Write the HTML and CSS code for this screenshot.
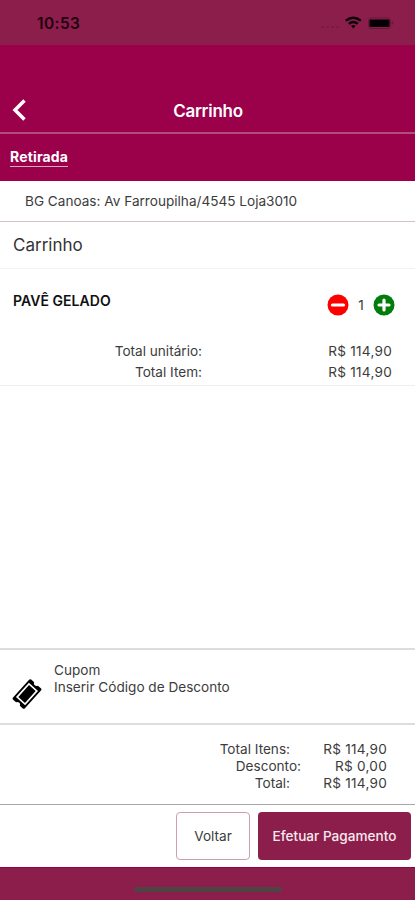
FILE: index.html
```html
<!DOCTYPE html>
<html lang="pt-BR">
<head>
<meta charset="utf-8">
<title>Carrinho</title>
<link rel="stylesheet" href="styles.css">
</head>
<body>
<div class="status">
  <span class="time">10:53</span>
  <svg class="indicators" width="76" height="18" viewBox="0 0 76 18">
    <path d="M0 13h3M5 13h3M10 13h3M15 13h3" stroke="#6b193b" stroke-width="1"/>
    <g fill="none" stroke="#0c0208" stroke-width="2.400">
      <path d="M24.800 6.700Q32.300 .8 39.800 6.700"/>
      <path d="M27.800 9.900Q32.300 6.200 36.800 9.900"/>
    </g>
    <path d="M30 11.800Q32.300 10 34.600 11.800L32.300 14.500z" fill="#0c0208"/>
    <rect x="47.500" y="4" width="22" height="10.500" rx="2.500" fill="none" stroke="#65183a"/>
    <rect x="48.500" y="5.500" width="20" height="7.500" rx="1" fill="#050003"/>
    <path d="M71.500 7.500v3" stroke="#65183a" stroke-width="1.500"/>
  </svg>
</div>
<header class="header">
  <svg class="back" width="16" height="24" viewBox="0 0 16 24"><path d="M12.500 2.500L3 12l9.500 9.500" fill="none" stroke="#fff" stroke-width="3.500"/></svg>
  <h1>Carrinho</h1>
</header>
<nav class="tabs"><span class="tab">Retirada</span></nav>
<div class="address">BG Canoas: Av Farroupilha/4545 Loja3010</div>
<h2 class="section">Carrinho</h2>
<section class="item">
  <div class="item-head">
    <strong class="name">PAVÊ GELADO</strong>
    <div class="qty">
      <svg width="22" height="22" viewBox="0 0 22 22"><circle cx="11" cy="11" r="10.500" fill="#f00"/><path d="M5.500 11h11" stroke="#fff" stroke-width="3.200" stroke-linecap="round"/></svg>
      <span>1</span>
      <svg width="22" height="22" viewBox="0 0 22 22"><circle cx="11" cy="11" r="10.500" fill="#007d0b"/><path d="M6 11h10M11 6v10" stroke="#fff" stroke-width="3.200" stroke-linecap="round"/></svg>
    </div>
  </div>
  <div class="line"><span>Total unitário:</span><span class="value">R$ 114,90</span></div>
  <div class="line"><span>Total Item:</span><span class="value">R$ 114,90</span></div>
</section>
<main class="space"></main>
<section class="coupon">
  <svg class="ticket" width="30" height="30" viewBox="0 0 30 30">
    <g transform="rotate(-48 15 15)">
      <path d="M3 7h24q1.500 0 1.500 1.500v4a2.600 2.600 0 0 0 0 5v4q0 1.500-1.500 1.500H3Q1.500 23 1.500 21.500v-4a2.600 2.600 0 0 0 0-5v-4Q1.500 7 3 7z" fill="#000"/>
      <rect x="6.200" y="9.700" width="17.600" height="10.600" fill="#000" stroke="#fff" stroke-width="1.700"/>
    </g>
  </svg>
  <div class="coupon-text"><div>Cupom</div><div>Inserir Código de Desconto</div></div>
</section>
<section class="totals">
  <div class="sum"><span>Total Itens:</span><span class="value">R$ 114,90</span></div>
  <div class="sum discount"><span>Desconto:</span><span class="value">R$ 0,00</span></div>
  <div class="sum"><span>Total:</span><span class="value">R$ 114,90</span></div>
</section>
<footer class="actions">
  <button class="btn outline">Voltar</button>
  <button class="btn solid">Efetuar Pagamento</button>
</footer>
<div class="home"><div class="bar"></div></div>
</body>
</html>
```
FILE: styles.css
```css
* { box-sizing: border-box; }
body {
  margin: 0;
  height: 900px;
  display: flex;
  flex-direction: column;
  overflow: hidden;
  background: #fff;
  color: #3c3c3c;
  font: 13.6px/17px Inter, "Liberation Sans", sans-serif;
}
body > * { flex-shrink: 0; }
.status {
  height: 45px;
  padding: 0 18px 0 37px;
  display: flex;
  align-items: center;
  justify-content: space-between;
  background: #8c1e4b;
}
.time { color: #23000f; font-size: 15.500px; font-weight: 600; padding-top: 1px; letter-spacing: .4px; }
.indicators { display: block; }
.header {
  height: 89px;
  padding: 52px 12px 0;
  display: grid;
  grid-template-columns: 16px 1fr 16px;
  background: #9b004a;
  border-bottom: 2px solid #b34d7c;
}
.back { margin-top: 1px; }
h1 {
  margin: 0;
  padding-left: 1px;
  color: #fff;
  font-size: 17px;
  line-height: 28px;
  font-weight: 600;
  letter-spacing: -.25px;
  text-align: center;
}
.tabs {
  height: 47px;
  padding: 14px 10px 0;
  background: #9b004a;
}
.tab {
  display: inline-block;
  height: 19px;
  color: #fff;
  font-size: 14px;
  line-height: 18px;
  font-weight: 700;
  letter-spacing: .15px;
  border-bottom: 1px solid #dda6c1;
}
.address {
  height: 41px;
  padding: 0 25px;
  line-height: 40px;
  border-bottom: 1px solid #cfc3c4;
}
.section {
  margin: 0;
  height: 47px;
  padding: 0 13px;
  color: #333;
  font-size: 17px;
  line-height: 47px;
  font-weight: 400;
  border-bottom: 1px solid #f2f2f2;
}
.item {
  height: 117px;
  padding: 22px 20px 0 13px;
  border-bottom: 1px solid #eee;
}
.item-head { display: flex; justify-content: space-between; height: 50px; }
.name { color: #111; font-size: 14px; line-height: 20px; font-weight: 600; letter-spacing: .05px; }
.qty { display: flex; align-items: center; justify-content: space-between; width: 68px; height: 28px; }
.line {
  display: grid;
  grid-template-columns: 189px 190px;
  text-align: right;
  line-height: 21px;
}
.value { letter-spacing: .25px; }
.space { flex: 1; }
.coupon {
  height: 77px;
  padding: 12px 12px 0;
  display: flex;
  gap: 12px;
  border-top: 2px solid #ddd;
  border-bottom: 2px solid #ddd;
}
.ticket { margin-top: 17px; }
.totals {
  height: 79px;
  padding: 16px 28px 0 0;
}
.sum { display: grid; grid-template-columns: 290px 97px; text-align: right; }
.discount { grid-template-columns: 301px 86px; }
.actions {
  height: 63px;
  padding: 7px 4px 0;
  display: flex;
  justify-content: flex-end;
  gap: 8px;
  border-top: 1px solid #a8a8a8;
}
.btn {
  height: 48px;
  padding: 0;
  font: 13.6px/17px Inter, "Liberation Sans", sans-serif;
  border-radius: 4px;
}
.outline { width: 74px; color: #3c3c3c; background: #fff; border: 1px solid #ce9fb2; }
.solid { width: 153px; color: #f7e9ef; background: #8c1e4b; border: 0; font-weight: 500; }
.home {
  height: 33px;
  display: flex;
  justify-content: center;
  padding-top: 19px;
  background: #8c1e4b;
  border-top: 1px solid #980044;
}
.bar { width: 148px; height: 5px; border-radius: 3px; background: #504346; }
```
